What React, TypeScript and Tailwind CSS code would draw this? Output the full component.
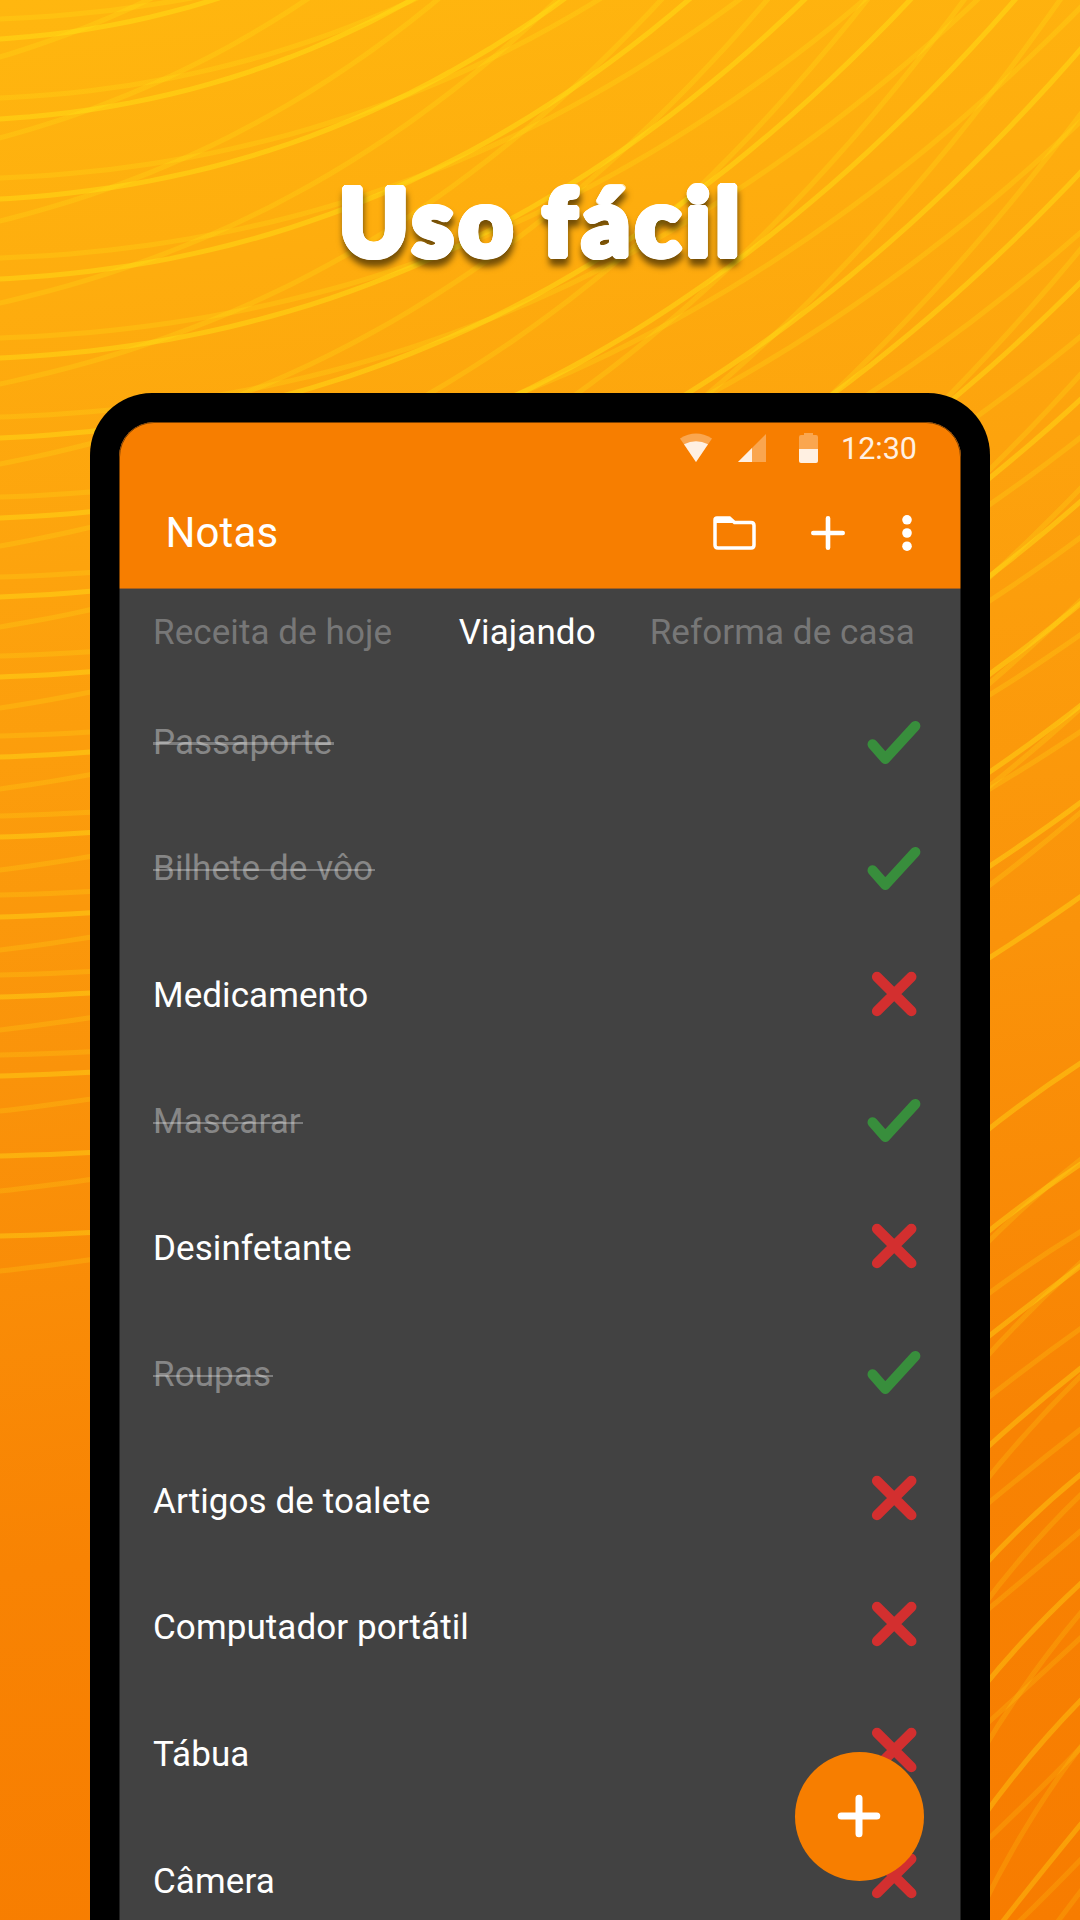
type Anchor = [start: number, x: number, y: number];
type Shape = [a: number, b: number, c: number];

// Each strand starts at the left edge and rises through its anchor point.
const bright: Anchor[] = [
  [39, 213, 0], [119, 406, 3], [199, 540, 16], [279, 686, 2], [358, 802, 2], [438, 910, 0],
  [518, 1013, 2], [597, 1080, 50], [677, 1080, 173], [757, 1080, 283], [837, 1080, 400],
  [917, 1080, 502], [997, 1080, 604], [1076, 1080, 706], [1156, 1080, 803], [1236, 1080, 897],
];
const flat: Anchor[] = [
  [19, 180, 0], [98, 413, 0], [178, 598, 0], [258, 736, 2], [338, 864, 0], [417, 977, 0],
  [497, 1080, 8], [577, 1080, 122], [656, 1080, 233], [736, 1080, 337], [816, 1080, 438],
  [895, 1080, 538], [975, 1080, 635], [1055, 1080, 732],
];
const steep: Anchor[] = [
  [57, 148, 0], [138, 306, 0], [221, 437, 0], [303, 557, 0], [384, 661, 0], [464, 767, 0],
  [546, 867, 0], [627, 964, 0], [708, 1060, 0], [789, 1080, 115], [870, 1080, 250],
  [950, 1080, 375], [1030, 1080, 489], [1111, 1080, 601], [1191, 1080, 709], [1271, 1080, 813],
];

const rise = ([a, b, c]: Shape, x: number) => a * x + b * x * x + c * x * x * x;

function strand([start, ax, ay]: Anchor, shape: Shape) {
  const gain = (start - ay) / rise(shape, ax);
  const points: string[] = [];
  for (let x = -10; x <= 1090; x += 20) {
    points.push(`${x},${(start - gain * rise(shape, x)).toFixed(1)}`);
  }
  return "M" + points.join("L");
}

const cornerBright = [
  "M980 1136Q1035 1092 1090 1057", "M980 1238Q1033 1195 1090 1158", "M980 1343Q1035 1300 1090 1259",
  "M980 1454Q1033 1405 1090 1361", "M980 1570Q1032 1513 1090 1467", "M980 1691Q1031 1628 1090 1575",
  "M980 1821Q1029 1752 1090 1691", "M980 1951Q1028 1888 1090 1813",
];
const cornerDim = [
  "M980 1250Q1033 1196 1090 1152", "M980 1364Q1032 1306 1090 1254", "M980 1488Q1031 1424 1090 1367",
  "M980 1610Q1031 1541 1090 1486", "M980 1755Q1030 1671 1090 1602", "M980 1912Q1028 1813 1090 1735",
  "M1040 1945L1090 1879",
  "M980 1300Q1033 1260 1090 1226", "M980 1404Q1033 1362 1090 1322", "M980 1510Q1033 1466 1090 1422",
  "M980 1616Q1033 1572 1090 1523", "M980 1730Q1033 1682 1090 1629", "M980 1847Q1033 1797 1090 1738",
  "M1005 1935Q1040 1902 1090 1850",
];

function Waves() {
  return (
    <svg className="absolute inset-0" width="1080" height="1920" viewBox="0 0 1080 1920" fill="none">
      <defs>
        <linearGradient id="strong" gradientUnits="userSpaceOnUse" x1="0" y1="0" x2="0" y2="1920">
          <stop offset="0" stopColor="#ffdf15" stopOpacity=".5" />
          <stop offset="1" stopColor="#ffdf15" stopOpacity=".34" />
        </linearGradient>
        <linearGradient id="soft" gradientUnits="userSpaceOnUse" x1="0" y1="0" x2="0" y2="1920">
          <stop offset="0" stopColor="#ffdf15" stopOpacity=".27" />
          <stop offset="1" stopColor="#ffdf15" stopOpacity=".17" />
        </linearGradient>
      </defs>
      <g stroke="url(#soft)" strokeWidth="5">
        {flat.map((s) => <path key={s[0]} d={strand(s, [0.03, 2.66e-4, 1.17e-7])} />)}
        {steep.map((s, i) => (
          <path key={s[0]} d={strand(s, i <= 8 ? [0.115, 2e-4, 1.6e-7] : [0.105, 2e-4, (0.86 + (15 - i) * 0.09) * 1e-7])} />
        ))}
        {cornerDim.map((d) => <path key={d} d={d} />)}
      </g>
      <g stroke="url(#strong)" strokeWidth="5">
        {bright.map((s) => <path key={s[0]} d={strand(s, [0.04, 3e-4, 1.6e-7])} />)}
        {cornerBright.map((d) => <path key={d} d={d} />)}
      </g>
    </svg>
  );
}

const items: { label: string; done: boolean }[] = [
  { label: "Passaporte", done: true },
  { label: "Bilhete de vôo", done: true },
  { label: "Medicamento", done: false },
  { label: "Mascarar", done: true },
  { label: "Desinfetante", done: false },
  { label: "Roupas", done: true },
  { label: "Artigos de toalete", done: false },
  { label: "Computador portátil", done: false },
  { label: "Tábua", done: false },
  { label: "Câmera", done: false },
];

function Mark({ done }: { done: boolean }) {
  return (
    <svg width="60" height="60" viewBox="0 0 60 60" fill="none" strokeWidth="10.2" strokeLinecap="round" strokeLinejoin="round">
      {done ? (
        <path stroke="#388e3c" d="M8.6 32.3L21.3 46.8L51.3 14" />
      ) : (
        <path stroke="#d32f2f" d="M13 12.8L47.4 47.2M47.4 12.8L13 47.2" />
      )}
    </svg>
  );
}

function StatusBar() {
  return (
    <div className="flex h-[52px] items-center justify-end pr-[44px] text-[#fff0e2]">
      <svg className="mr-[26px]" width="32" height="30" viewBox="0 0 32 30" fill="currentColor">
        <path opacity=".35" d="M0 5.5Q16-4.5 32 5.5L16 29Z" />
        <path d="M4 11.3Q16 5 28 11.3L16 29Z" />
      </svg>
      <svg className="mr-[33px]" width="28" height="30" viewBox="0 0 28 30" fill="currentColor">
        <path opacity=".35" d="M28 1V29H0Z" />
        <path d="M14 15V29H0Z" />
      </svg>
      <svg className="mr-[23px]" width="19" height="32" viewBox="0 0 19 32" fill="currentColor">
        <path opacity=".35" d="M5 1H14V3H17Q19 3 19 5V17H0V5Q0 3 2 3H5Z" />
        <path d="M0 17H19V29Q19 31 17 31H2Q0 31 0 29Z" />
      </svg>
      <span className="w-[76px] whitespace-nowrap pt-[2px] text-[30.5px] leading-[36px]">12:30</span>
    </div>
  );
}

export default function App() {
  return (
    <main className="relative h-[1920px] w-[1080px] overflow-hidden bg-[linear-gradient(172deg,#ffb70f_0%,#fda30d_28%,#fa930a_52%,#f88303_76%,#f77c00_100%)] font-['Roboto',sans-serif]">
      <Waves />
      <div className="relative flex h-full flex-col items-center">
        <header className="flex h-[393px] w-full shrink-0 justify-center pt-[160px] pl-[4px]">
          <h1 className="h-[120px] whitespace-nowrap font-['Lato',sans-serif] text-[93px] leading-[120px] font-black tracking-[5.6px] text-white [filter:drop-shadow(1px_7px_3px_rgba(0,0,0,0.55))] [text-shadow:3.4px_0_white,-3.4px_0_white,0_3.4px_white,0_-3.4px_white,2.4px_2.4px_white,-2.4px_2.4px_white,2.4px_-2.4px_white,-2.4px_-2.4px_white,3.1px_1.3px_white,-3.1px_1.3px_white,3.1px_-1.3px_white,-3.1px_-1.3px_white,1.3px_3.1px_white,-1.3px_3.1px_white,1.3px_-3.1px_white,-1.3px_-3.1px_white] [word-spacing:-3px]">
            Uso fácil
          </h1>
        </header>

        <section className="h-[1600px] w-[900px] shrink-0 rounded-t-[62px] bg-black px-[29px] pt-[29px]">
          <div className="relative h-[1570px] overflow-hidden rounded-t-[35px] bg-[#424242]">
            <div className="h-[167px] border-b border-[#a8601f] bg-[#f77e00]">
              <StatusBar />
              <div className="flex h-[115px] items-center pt-[2px] pl-[46.5px] text-white">
                <h2 className="flex-1 pt-px text-[42px] leading-[50px] tracking-[0.1px]">Notas</h2>
                <svg className="mr-[53px]" width="45" height="36" viewBox="0 0 45 36" fill="none">
                  <path d="M5 3H17.5L22.5 7.5H39Q42 7.5 42 10.5V30Q42 33 39 33H6Q3 33 3 30V5Q3 3 5 3Z" stroke="white" strokeWidth="3.5" />
                  <path d="M2 3H17.5L22.5 8H2Z" fill="white" />
                </svg>
                <svg className="mr-[55px]" width="36" height="36" viewBox="0 0 36 36" stroke="white" strokeWidth="4.6" strokeLinecap="round">
                  <path d="M18 3.3V32.7M3.3 18H32.7" />
                </svg>
                <svg className="mr-[48px]" width="12" height="38" viewBox="0 0 12 38" fill="white">
                  <circle cx="6" cy="5.8" r="4.8" />
                  <circle cx="6" cy="19" r="4.8" />
                  <circle cx="6" cy="32.2" r="4.8" />
                </svg>
              </div>
            </div>

            <nav className="flex h-[88px] items-center pl-[34px] text-[35px] leading-[44px] text-[#777777]">
              <span className="w-[305.7px] tracking-[0.08px]">Receita de hoje</span>
              <span className="w-[191px] tracking-[0.1px] text-white">Viajando</span>
              <span className="tracking-[0.08px]">Reforma de casa</span>
            </nav>

            <div className="flex justify-between pt-[2px] pr-[36.7px] pl-[34px]">
              <ul className="pt-[0.4px] text-[35px] tracking-[0.08px]">
                {items.map(({ label, done }) => (
                  <li key={label} className="flex h-[126.55px] items-center">
                    {done ? (
                      <span className="relative leading-[44px] text-[#868686]">
                        {label}
                        <span className="absolute -right-[2px] left-0 top-[21.5px] h-[2.5px] bg-white/30" />
                      </span>
                    ) : (
                      <span className="leading-[44px] text-white">{label}</span>
                    )}
                  </li>
                ))}
              </ul>
              <ul>
                {items.map(({ label, done }) => (
                  <li key={label} className="flex h-[126px] items-center">
                    <Mark done={done} />
                  </li>
                ))}
              </ul>
            </div>

            <button className="absolute top-[1329.7px] left-[675.7px] flex size-[129px] items-center justify-center rounded-full bg-[#f77e00]">
              <svg width="46" height="46" viewBox="0 0 46 46" stroke="white" strokeWidth="7" strokeLinecap="round">
                <path d="M23 5.2V40.8M5.2 23H40.8" />
              </svg>
            </button>
            <div className="pointer-events-none absolute inset-0 rounded-t-[35px] border border-black/50" />
          </div>
        </section>
      </div>
    </main>
  );
}
